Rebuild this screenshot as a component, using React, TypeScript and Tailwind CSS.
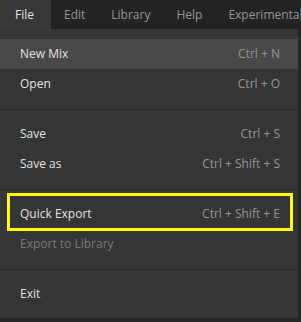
const tabs = ["File", "Edit", "Library", "Help", "Experimental"];

type Item = { label: string; shortcut?: string; disabled?: boolean; active?: boolean; marked?: boolean };

const groups: Item[][] = [
  [
    { label: "New Mix", shortcut: "Ctrl + N", active: true },
    { label: "Open", shortcut: "Ctrl + O" },
  ],
  [
    { label: "Save", shortcut: "Ctrl + S" },
    { label: "Save as", shortcut: "Ctrl + Shift + S" },
  ],
  [
    { label: "Quick Export", shortcut: "Ctrl + Shift + E", marked: true },
    { label: "Export to Library", disabled: true },
  ],
  [{ label: "Exit" }],
];

function MenuRow({ item }: { item: Item }) {
  return (
    <div
      className={
        "relative h-[30px] flex items-center justify-between pl-5 pr-[18px] " +
        (item.active ? "bg-[#484848]" : "")
      }
    >
      <span className={item.disabled ? "text-[#7a7a7a]" : "text-[#e2e2e2]"}>{item.label}</span>
      {item.shortcut && <span className="text-[#969696]">{item.shortcut}</span>}
      {item.marked && (
        <div className="absolute left-[7px] right-[5px] top-[-6px] bottom-[-2px] border-[3px] border-[#ffff00]" />
      )}
    </div>
  );
}

export default function App() {
  return (
    <div
      className="w-[301px] h-[322px] bg-[#262626] text-[12px] overflow-hidden"
      style={{ fontFamily: '"Open Sans", "Noto Sans", sans-serif' }}
    >
      <div className="h-[29px] flex bg-[#232323] whitespace-nowrap">
        {tabs.map((t, i) => (
          <div
            key={t}
            className={
              "h-full flex items-center px-[13px] " +
              (i === 0 ? "bg-[#383838] text-[#e2e2e2] pl-[15px] pr-[17px]" : "text-[#969696]")
            }
          >
            {t}
          </div>
        ))}
      </div>
      <div className="w-[298px] h-[289px] bg-[#353535] pt-[10px] pb-[9px]">
        {groups.map((g, gi) => (
          <div key={gi}>
            {gi > 0 && (
              <div className="h-[20px] flex items-center">
                <div className="w-full h-px bg-[#262626]" />
              </div>
            )}
            {g.map((item) => (
              <MenuRow key={item.label} item={item} />
            ))}
          </div>
        ))}
      </div>
    </div>
  );
}
